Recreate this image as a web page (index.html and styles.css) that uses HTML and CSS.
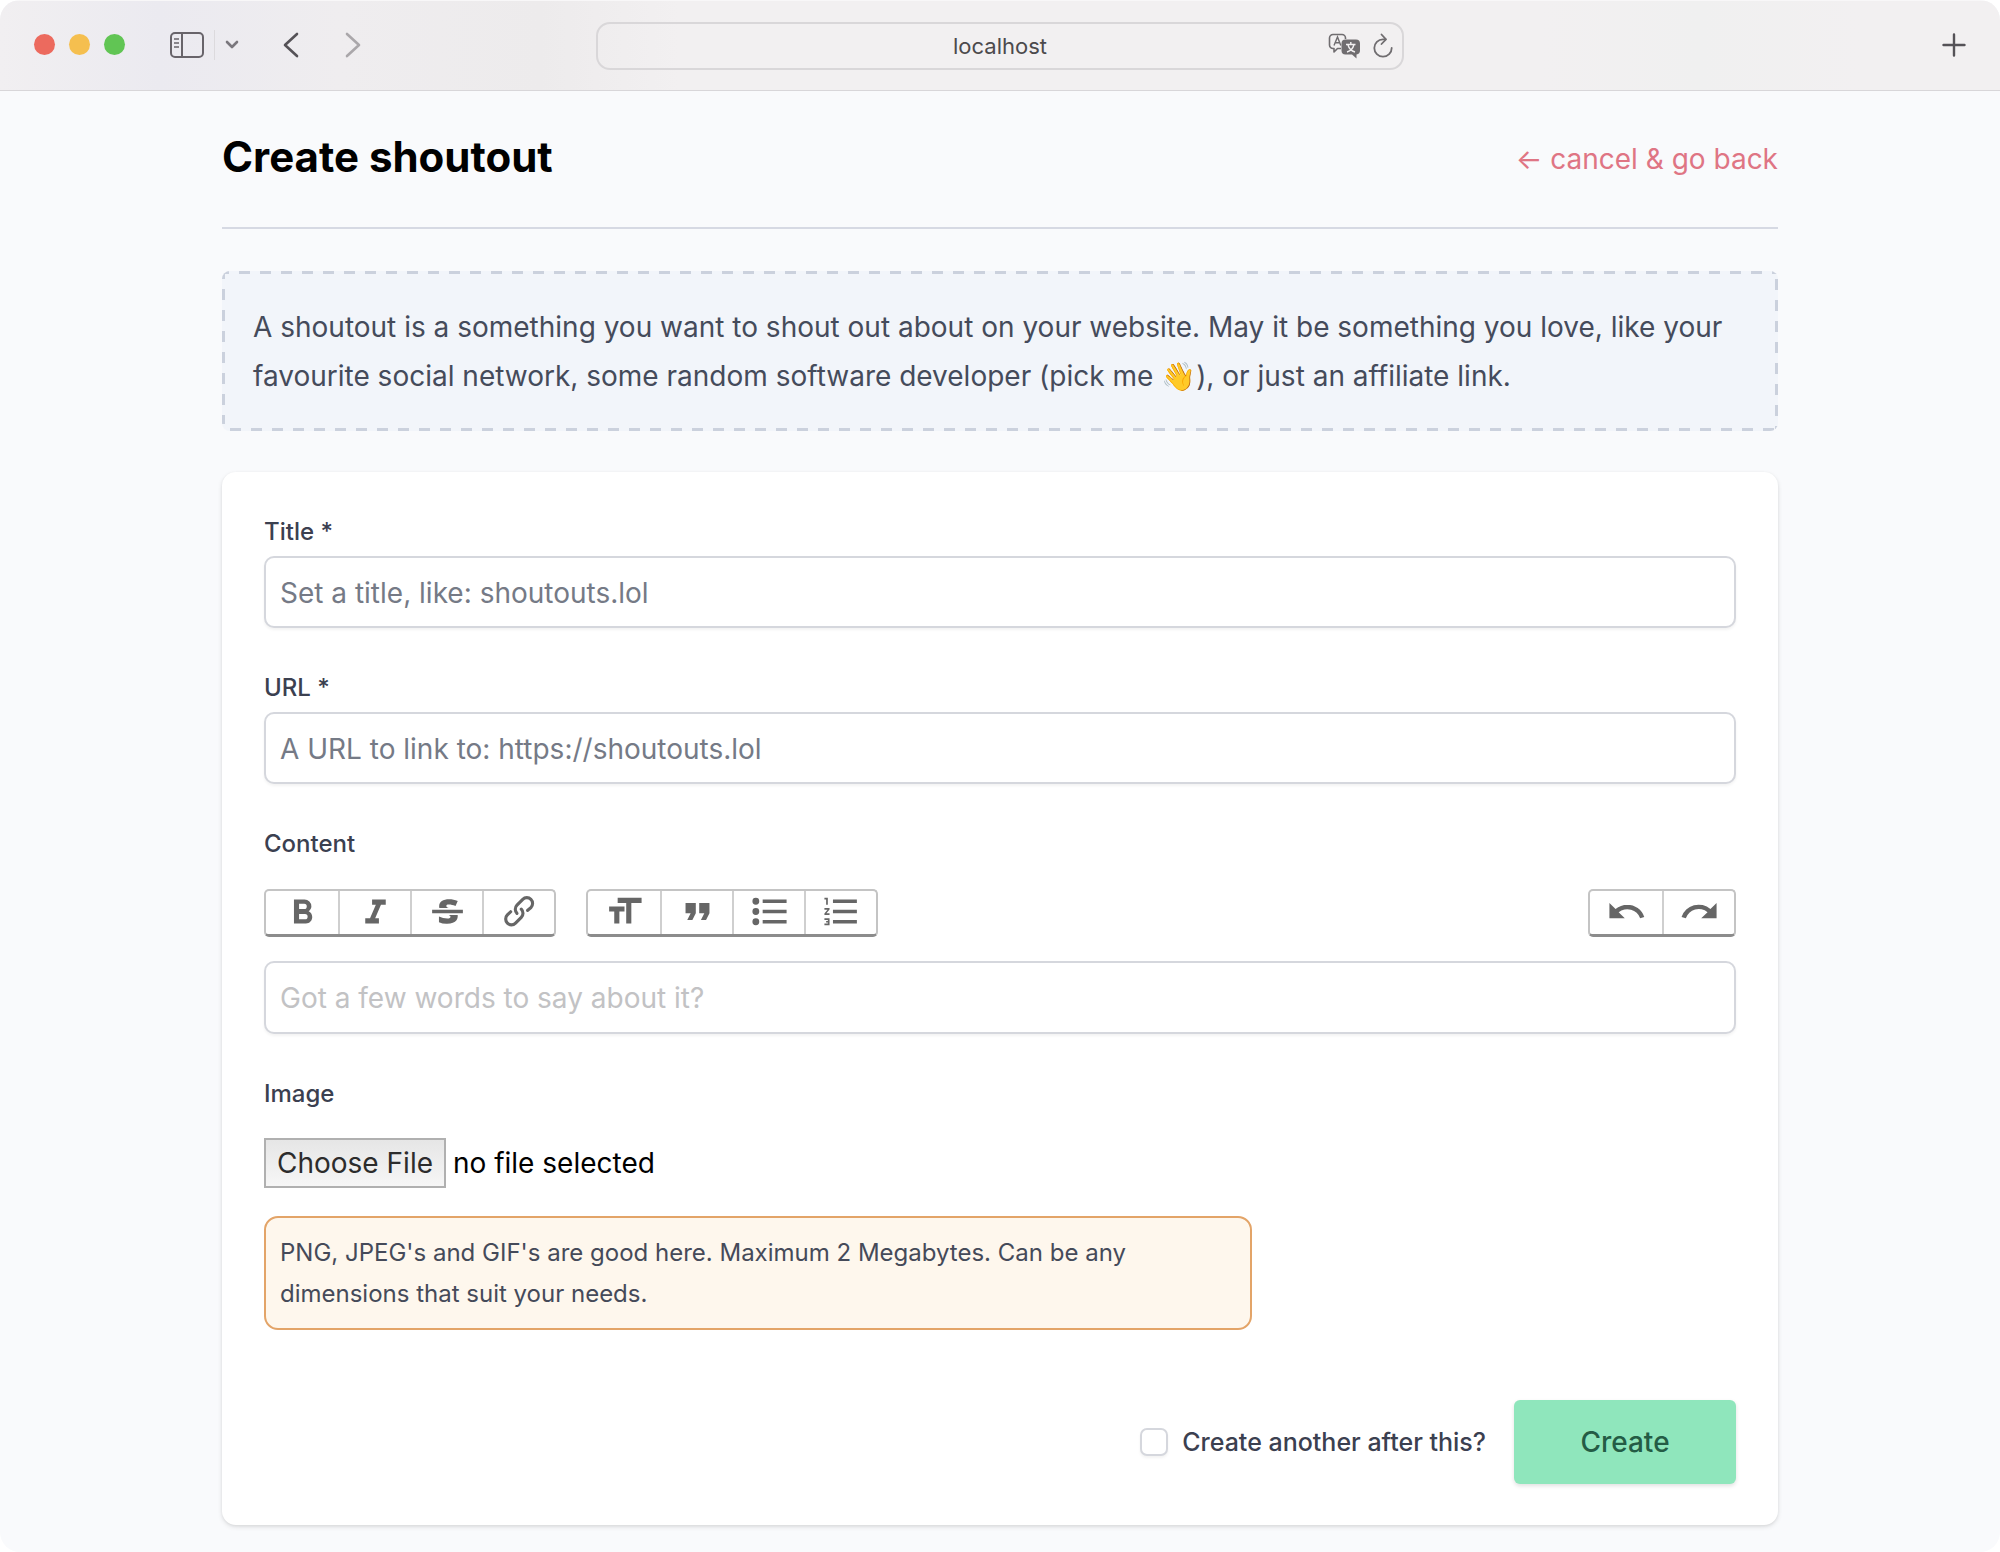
FILE: index.html
```html
<!DOCTYPE html>
<html lang="en">
<head>
<meta charset="utf-8">
<meta name="viewport" content="width=device-width, initial-scale=1">
<title>Create shoutout</title>
<link rel="stylesheet" href="styles.css">
</head>
<body>
<div class="window">
  <header class="chrome">
    <div class="chrome-left">
      <div class="lights">
        <span class="light light-close"></span>
        <span class="light light-min"></span>
        <span class="light light-max"></span>
      </div>
      <div class="sidebar-tools">
        <button class="tool" type="button" aria-label="Show sidebar">
          <svg width="34" height="28" viewBox="0 0 34 28" fill="none" stroke="#68646a" stroke-width="2"><rect x="1" y="2" width="32" height="24" rx="4"/><path d="M12 2v24"/><path d="M4 8h5M4 12h5M4 16h5" stroke-width="1.5"/></svg>
        </button>
        <span class="divider"></span>
        <button class="tool" type="button" aria-label="Tab groups">
          <svg width="14" height="10" viewBox="0 0 14 10" fill="none" stroke="#7a777d" stroke-width="2.6" stroke-linecap="round" stroke-linejoin="round"><path d="M2 2l5 5 5-5"/></svg>
        </button>
      </div>
      <div class="history">
        <button class="tool" type="button" aria-label="Back">
          <svg width="16" height="28" viewBox="0 0 16 28" fill="none" stroke="#555257" stroke-width="2.6" stroke-linecap="round" stroke-linejoin="round"><path d="M14 3L2 14l12 11"/></svg>
        </button>
        <button class="tool" type="button" aria-label="Forward">
          <svg width="16" height="28" viewBox="0 0 16 28" fill="none" stroke="#aaa7aa" stroke-width="2.6" stroke-linecap="round" stroke-linejoin="round"><path d="M2 3l12 11L2 25"/></svg>
        </button>
      </div>
    </div>
    <div class="address">
      <span class="address-text">localhost</span>
      <div class="address-tools">
        <button class="tool" type="button" aria-label="Translate">
          <svg width="34" height="26" viewBox="0 0 34 26"><path d="M13 15.500H9.500L6 19v-3.500H5A3.500 3.500 0 0 1 1.500 12V5A3.500 3.500 0 0 1 5 1.500h9A3.500 3.500 0 0 1 17.500 5v1" fill="none" stroke="#706d70" stroke-width="1.600" stroke-linejoin="round"/><path d="M6 12.500L9.500 4l3.300 8.500M7.200 9.800h4.600" fill="none" stroke="#706d70" stroke-width="1.400"/><path d="M17.500 6.500H28a4 4 0 0 1 4 4v7a4 4 0 0 1-3.500 4V25.500L24 21.500h-6.500a4 4 0 0 1-4-4v-7a4 4 0 0 1 4-4z" fill="#706d70"/><path d="M18 11.500h9.500M22.800 9v2.500M26 11.500c-1 4-3.500 6.500-7 7.500M20 12c1 3.500 3.500 6 7 7" fill="none" stroke="#f2f0f1" stroke-width="1.400"/></svg>
        </button>
        <button class="tool" type="button" aria-label="Reload">
          <svg width="22" height="26" viewBox="0 0 22 26" fill="none" stroke="#706d70" stroke-width="1.800" stroke-linecap="round" stroke-linejoin="round"><path d="M13.500 6.300H11a8.700 8.700 0 1 0 8.700 8.700"/><path d="M9.500 1.500l4.500 4.800L9.500 11"/></svg>
        </button>
      </div>
    </div>
    <div class="chrome-right">
      <button class="tool" type="button" aria-label="New tab">
        <svg width="24" height="24" viewBox="0 0 24 24" fill="none" stroke="#555257" stroke-width="2.400" stroke-linecap="round"><path d="M12 1.500v21M1.500 12h21"/></svg>
      </button>
    </div>
  </header>

  <main class="page">
    <div class="page-head">
      <h1>Create shoutout</h1>
      <a class="cancel" href="#">← cancel &amp; go back</a>
    </div>

    <p class="intro">A shoutout is a something you want to shout out about on your website. May it be something you love, like your favourite social network, some random software developer (pick me 👋), or just an affiliate link.</p>

    <form class="card">
      <div class="field">
        <label for="title">Title *</label>
        <input class="control" id="title" type="text" placeholder="Set a title, like: shoutouts.lol">
      </div>
      <div class="field">
        <label for="url">URL *</label>
        <input class="control" id="url" type="url" placeholder="A URL to link to: https://shoutouts.lol">
      </div>
      <div class="field">
        <label for="content">Content</label>
        <div class="toolbar">
          <div class="group">
            <button type="button" aria-label="Bold"><svg viewBox="0 0 24 24"><path d="M15.600 11.800c1-.7 1.600-1.800 1.600-2.800a4 4 0 0 0-4-4H7v14h7c2.100 0 3.700-1.700 3.700-3.800 0-1.500-.8-2.800-2.100-3.400zM10 7.500h3a1.500 1.500 0 1 1 0 3h-3v-3zm3.500 9H10v-3h3.500a1.500 1.500 0 1 1 0 3z"/></svg></button>
            <button type="button" aria-label="Italic"><svg viewBox="0 0 24 24"><path d="M10 5v3h2.200l-3.400 8H6v3h8v-3h-2.200l3.400-8H18V5h-8z"/></svg></button>
            <button type="button" aria-label="Strikethrough"><svg viewBox="0 0 24 24"><path d="M12.730 14l.28.14c.26.15.45.3.57.44.12.14.18.3.18.5 0 .3-.15.56-.44.75-.3.2-.76.3-1.390.3A13.520 13.520 0 0 1 7 14.950v3.370a10.640 10.640 0 0 0 4.840.88c1.260 0 2.350-.19 3.280-.56.93-.37 1.640-.9 2.140-1.570s.74-1.450.74-2.320c0-.26-.02-.51-.06-.75h-5.210zm-5.500-4c-.08-.34-.12-.7-.12-1.100 0-1.290.52-2.300 1.580-3.020 1.050-.72 2.500-1.080 4.340-1.080 1.620 0 3.280.34 4.970 1l-1.300 2.930c-1.470-.6-2.730-.9-3.800-.9-.55 0-.96.08-1.200.26-.26.17-.38.38-.38.64 0 .27.16.52.48.74.17.12.53.3 1.050.53H7.230zM3 13h18v-2H3v2z"/></svg></button>
            <button type="button" aria-label="Link"><svg viewBox="0 0 24 24"><path d="M9.880 13.700a4.300 4.300 0 0 1 0-6.070l3.370-3.370a4.260 4.260 0 0 1 6.070 0 4.300 4.300 0 0 1 0 6.060l-1.960 1.720a.91.91 0 1 1-1.300-1.300l1.970-1.710a2.460 2.460 0 0 0-3.480-3.480l-3.380 3.370a2.460 2.460 0 0 0 0 3.480.91.91 0 1 1-1.300 1.300z"/><path d="M4.250 19.460a4.300 4.300 0 0 1 0-6.070l1.930-1.900a.91.91 0 1 1 1.300 1.300l-1.930 1.900a2.460 2.460 0 0 0 3.480 3.480l3.370-3.380c.96-.96.96-2.520 0-3.480a.91.91 0 1 1 1.300-1.300 4.300 4.300 0 0 1 0 6.070l-3.380 3.380a4.260 4.260 0 0 1-6.070 0z"/></svg></button>
          </div>
          <div class="group">
            <button type="button" aria-label="Heading"><svg viewBox="0 0 24 24"><path d="M12 9v3H9v7H6v-7H3V9h9zM8 4h14v3h-6v12h-3V7H8V4z"/></svg></button>
            <button type="button" aria-label="Quote"><svg viewBox="0 0 24 24"><path d="M6 17h3l2-4V7H5v6h3zm8 0h3l2-4V7h-6v6h3z"/></svg></button>
            <button type="button" aria-label="Bullets"><svg viewBox="0 0 24 24"><path d="M4 4a2 2 0 1 0 0 4 2 2 0 0 0 0-4zm0 6a2 2 0 1 0 0 4 2 2 0 0 0 0-4zm0 6a2 2 0 1 0 0 4 2 2 0 0 0 0-4zm4 3h14v-2H8v2zm0-6h14v-2H8v2zm0-8v2h14V5H8z"/></svg></button>
            <button type="button" aria-label="Numbers"><svg viewBox="0 0 24 24"><path d="M2 17h2v.5H3v1h1v.5H2v1h3v-4H2v1zm1-9h1V4H2v1h1v3zm-1 3h1.800L2 13.100v.9h3v-1H3.200L5 10.900V10H2v1zm5-6v2h14V5H7zm0 14h14v-2H7v2zm0-6h14v-2H7v2z"/></svg></button>
          </div>
          <div class="group group-end">
            <button type="button" aria-label="Undo"><svg viewBox="0 0 24 24"><path d="M12.500 8c-2.600 0-5 1-6.900 2.600L2 7v9h9l-3.600-3.600A8 8 0 0 1 20 16l2.400-.8a10.500 10.500 0 0 0-10-7.200z"/></svg></button>
            <button type="button" aria-label="Redo"><svg viewBox="0 0 24 24"><path d="M18.400 10.600a10.500 10.500 0 0 0-16.900 4.600L4 16a8 8 0 0 1 12.700-3.600L13 16h9V7l-3.600 3.600z"/></svg></button>
          </div>
        </div>
        <textarea class="control editor" id="content" rows="1" placeholder="Got a few words to say about it?"></textarea>
      </div>
      <div class="field">
        <label for="image">Image</label>
        <div class="file">
          <input class="file-input" id="image" type="file">
          <label class="file-button" for="image">Choose File</label>
          <span>no file selected</span>
        </div>
        <p class="hint">PNG, JPEG's and GIF's are good here. Maximum 2 Megabytes. Can be any dimensions that suit your needs.</p>
      </div>
      <div class="actions">
        <input class="check" id="another" type="checkbox">
        <label for="another">Create another after this?</label>
        <button class="submit" type="submit">Create</button>
      </div>
    </form>
  </main>
</div>
</body>
</html>
```
FILE: styles.css
```css
*, *::before, *::after { box-sizing: border-box; }

html { background: #fff; }

body {
  margin: 0;
  font-family: Inter, "Liberation Sans", sans-serif;
  font-size: 28px;
  line-height: 36px;
  color: #000;
}

h1, p { margin: 0; }

button, input, textarea { font: inherit; }

.window {
  min-height: 100vh;
  border-radius: 20px;
  overflow: hidden;
  background: #f9fafc;
}

/* Browser bar */
.chrome {
  display: grid;
  grid-template-columns: 1fr minmax(0, 808px) 1fr;
  align-items: center;
  height: 91px;
  border-top: 1px solid #f8f7f8;
  border-bottom: 1px solid #d8d6d9;
  background: linear-gradient(90deg, #f1eff1 0%, #ebeaf0 8%, #efedef 17%, #edebec 27%, #f2f0f1 34%, #f2f0f1 77%, #f0f0f0 85%, #f2f0f1 93%);
}

.chrome-left { display: flex; align-items: center; padding: 0 0 2px 34px; }

.lights { display: flex; gap: 14px; }

.light { width: 21px; height: 21px; border-radius: 50%; }
.light-close { background: #ec6a5e; }
.light-min { background: #f5bf4f; }
.light-max { background: #61c554; }

.sidebar-tools { display: flex; align-items: center; gap: 10px; margin-left: 45px; }

.divider { width: 1px; height: 30px; background: #dcdadd; }

.history { display: flex; gap: 46px; margin-left: 44px; }

.tool {
  display: flex;
  padding: 0;
  border: 0;
  background: none;
}

.address {
  display: grid;
  grid-template-columns: 1fr auto 1fr;
  align-items: center;
  height: 48px;
  padding: 0 8px;
  border: 2px solid #d9d7d9;
  border-radius: 14px;
}

.address-text { grid-column: 2; font-size: 22px; color: #4c4a4c; }

.address-tools { display: flex; justify-content: flex-end; align-items: center; gap: 10px; }

.chrome-right { display: flex; justify-content: flex-end; padding: 0 34px 2px 0; }

/* Page */
.page {
  max-width: 1556px;
  margin: 0 auto;
  padding-bottom: 26px;
}

.page-head {
  display: flex;
  justify-content: space-between;
  align-items: flex-start;
  height: 138px;
  padding-top: 42px;
  border-bottom: 2px solid #d6d9e3;
}

h1 { font-size: 42px; line-height: 48px; font-weight: 700; }

.cancel { line-height: 52px; color: #df7584; text-decoration: none; }

/* Long dashes, drawn as tiled gradients along each edge */
.intro {
  --dash: #cbd1dd 0 11px, transparent 11px 21px;
  margin-top: 42px;
  padding: 32px 31px 30px;
  border-radius: 8px;
  background:
    repeating-linear-gradient(90deg, var(--dash)) -4px 0 / calc(100% + 4px) 3px no-repeat,
    repeating-linear-gradient(90deg, var(--dash)) 8px 100% / 100% 3px no-repeat,
    repeating-linear-gradient(180deg, var(--dash)) 0 -3px / 3px calc(100% - 4px) no-repeat,
    repeating-linear-gradient(180deg, var(--dash)) 100% 8px / 3px 100% no-repeat,
    #f2f5fa;
  line-height: 49px;
  color: #454b5b;
}

.card {
  margin-top: 41px;
  padding: 42px 42px 41px;
  border-radius: 14px;
  background: #fff;
  box-shadow: 0 2px 5px rgba(0, 0, 0, 0.1), 0 1px 3px rgba(0, 0, 0, 0.06);
}

.field { display: flex; flex-direction: column; align-items: stretch; }
.field + .field { margin-top: 42px; }

.field > label {
  font-size: 24px;
  line-height: 36px;
  font-weight: 500;
  color: #3b4050;
}

.control {
  width: 100%;
  height: 72px;
  margin: 6px 0 0;
  padding: 17px 14px 15px;
  border: 2px solid #d5d7dd;
  border-radius: 10px;
  background: #fff;
  box-shadow: 0 2px 3px rgba(0, 0, 0, 0.05);
  color: #111;
}

.control::placeholder { color: #757a86; opacity: 1; }

.editor { display: block; margin-top: 24px; height: 73px; resize: none; overflow: hidden; }
.editor::placeholder { color: #c2c2c4; }

.toolbar { display: flex; gap: 30px; margin-top: 27px; }

.group {
  display: flex;
  height: 48px;
  border: 2px solid #c4c4c4;
  border-bottom: 3px solid #8c8c8c;
  border-radius: 5px;
}

.group-end { margin-left: auto; }

.group button {
  display: flex;
  justify-content: center;
  width: 72px;
  padding: 0;
  border: 0;
  background: none;
}

.group button + button { border-left: 2px solid #cfcfcf; }

.group svg { width: 41px; height: 41px; fill: #666; }

.file { display: flex; align-items: center; gap: 7px; margin-top: 26px; }

.file-input { position: absolute; width: 1px; height: 1px; opacity: 0; }

.file-button {
  padding: 5px 11px;
  border: 2px solid #b0b0b0;
  background: linear-gradient(#e6e6e6, #f6f6f6);
  color: #2c2c2c;
}

.hint {
  max-width: 988px;
  margin-top: 28px;
  padding: 14px;
  border: 2px solid #e3a468;
  border-radius: 14px;
  background: #fef7ed;
  font-size: 24px;
  line-height: 41px;
  color: #454a59;
}

.actions {
  display: flex;
  justify-content: flex-end;
  align-items: center;
  margin-top: 70px;
}

.actions label {
  font-size: 25px;
  line-height: 36px;
  font-weight: 500;
  color: #3b4050;
}

.check {
  appearance: none;
  width: 28px;
  height: 28px;
  margin: 0 14px 0 0;
  border: 2px solid #d5d7dd;
  border-radius: 7px;
  background: #fff;
  box-shadow: 0 2px 3px rgba(0, 0, 0, 0.05);
}

.submit {
  width: 222px;
  height: 84px;
  margin-left: 28px;
  border: 0;
  border-radius: 6px;
  background: #8fe6bc;
  box-shadow: 0 2px 4px rgba(0, 0, 0, 0.12);
  font-weight: 500;
  color: #245c45;
}
```
